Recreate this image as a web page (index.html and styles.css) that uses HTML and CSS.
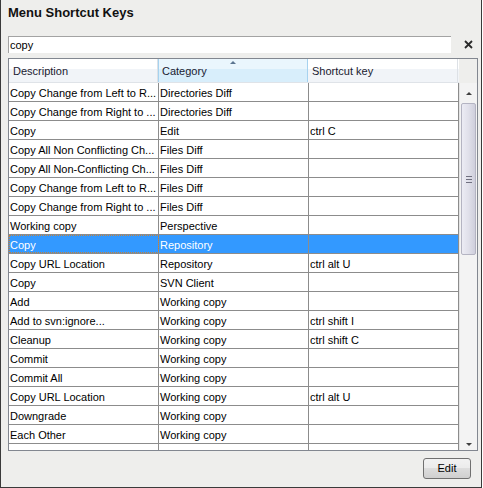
FILE: index.html
```html
<!DOCTYPE html>
<html>
<head>
<meta charset="utf-8">
<link rel="stylesheet" href="styles.css">
</head>
<body>
<div class="window">
  <h1 class="title">Menu Shortcut Keys</h1>
  <div class="search-row">
    <div class="search">copy</div>
    <span class="clear"><svg width="9" height="9" viewBox="0 0 9 9"><path d="M1 1 L8 8 M8 1 L1 8" stroke="#2a2a2a" stroke-width="1.8" fill="none"/></svg></span>
  </div>
  <div class="pane">
    <div class="header">
      <div class="hcell">Description</div>
      <div class="hcell sorted"><span class="sort-arrow"></span>Category</div>
      <div class="hcell">Shortcut key</div>
    </div>
    <div class="corner"></div>
    <div class="body">
      <div class="row"><div class="cell">Copy Change from Left to R...</div><div class="cell">Directories Diff</div><div class="cell"></div></div>
      <div class="row"><div class="cell">Copy Change from Right to ...</div><div class="cell">Directories Diff</div><div class="cell"></div></div>
      <div class="row"><div class="cell">Copy</div><div class="cell">Edit</div><div class="cell">ctrl C</div></div>
      <div class="row"><div class="cell">Copy All Non Conflicting Ch...</div><div class="cell">Files Diff</div><div class="cell"></div></div>
      <div class="row"><div class="cell">Copy All Non-Conflicting Ch...</div><div class="cell">Files Diff</div><div class="cell"></div></div>
      <div class="row"><div class="cell">Copy Change from Left to R...</div><div class="cell">Files Diff</div><div class="cell"></div></div>
      <div class="row"><div class="cell">Copy Change from Right to ...</div><div class="cell">Files Diff</div><div class="cell"></div></div>
      <div class="row"><div class="cell">Working copy</div><div class="cell">Perspective</div><div class="cell"></div></div>
      <div class="row selected"><div class="cell focus">Copy</div><div class="cell">Repository</div><div class="cell"></div></div>
      <div class="row"><div class="cell">Copy URL Location</div><div class="cell">Repository</div><div class="cell">ctrl alt U</div></div>
      <div class="row"><div class="cell">Copy</div><div class="cell">SVN Client</div><div class="cell"></div></div>
      <div class="row"><div class="cell">Add</div><div class="cell">Working copy</div><div class="cell"></div></div>
      <div class="row"><div class="cell">Add to svn:ignore...</div><div class="cell">Working copy</div><div class="cell">ctrl shift I</div></div>
      <div class="row"><div class="cell">Cleanup</div><div class="cell">Working copy</div><div class="cell">ctrl shift C</div></div>
      <div class="row"><div class="cell">Commit</div><div class="cell">Working copy</div><div class="cell"></div></div>
      <div class="row"><div class="cell">Commit All</div><div class="cell">Working copy</div><div class="cell"></div></div>
      <div class="row"><div class="cell">Copy URL Location</div><div class="cell">Working copy</div><div class="cell">ctrl alt U</div></div>
      <div class="row"><div class="cell">Downgrade</div><div class="cell">Working copy</div><div class="cell"></div></div>
      <div class="row"><div class="cell">Each Other</div><div class="cell">Working copy</div><div class="cell"></div></div>
      <div class="row"><div class="cell">Edit conflicts</div><div class="cell">Working copy</div><div class="cell">ctrl shift E</div></div>
    </div>
    <div class="vscroll">
      <div class="arrow-btn"><span class="tri up"></span></div>
      <div class="track">
        <div class="thumb"><span class="grip"></span></div>
      </div>
      <div class="arrow-btn"><span class="tri down"></span></div>
    </div>
  </div>
  <div class="buttons">
    <button class="edit">Edit</button>
  </div>
</div>
</body>
</html>
```

FILE: styles.css
```css
html, body {
  margin: 0;
  padding: 0;
  background: #ffffff;
}

.window {
  width: 482px;
  height: 488px;
  box-sizing: border-box;
  border-left: 1px solid #3a3a3a;
  border-right: 1px solid #3a3a3a;
  border-bottom: 1px solid #3a3a3a;
  background: #eeeeec;
  padding: 5px 3px 0 7px;
  display: flex;
  flex-direction: column;
  font-family: "Liberation Sans", Arial, sans-serif;
  font-size: 11px;
  color: #000;
}

.title {
  margin: 0;
  font-size: 13px;
  font-weight: bold;
  line-height: 15px;
  height: 15px;
  color: #111;
}

.search-row {
  margin-top: 16px;
  display: flex;
  align-items: flex-start;
  height: 18px;
}

.search {
  width: 443px;
  height: 17px;
  box-sizing: border-box;
  background: #ffffff;
  border-top: 1px solid #a3a3a3;
  border-left: 1px solid #a3a3a3;
  padding: 1px 0 0 1px;
  line-height: 14px;
  margin-right: 2px;
}

.clear {
  display: block;
  margin-left: 11px;
  margin-top: 4px;
  width: 9px;
  height: 9px;
}
.clear svg { display: block; }

.pane {
  margin-top: 4px;
  width: 470px;
  height: 393px;
  box-sizing: border-box;
  border: 1px solid #828790;
  background: #ffffff;
  display: grid;
  grid-template-columns: 450px 18px;
  grid-template-rows: 24px 367px;
  overflow: hidden;
}

.header {
  display: grid;
  grid-template-columns: 149px 150px 150px 1px;
  border-bottom: 1px solid #dfe3e8;
  background: linear-gradient(#ffffff 0, #ffffff 45%, #f1f4f8 45%, #f1f4f8 100%);
}

.hcell {
  position: relative;
  padding: 2px 0 0 4px;
  line-height: 21px;
  color: #1a1a30;
  border-right: 1px solid #dde1e6;
}

.hcell.sorted {
  background: linear-gradient(#eaf6fd 0, #eaf6fd 45%, #d8eefb 45%, #d8eefb 100%);
  border-left: 1px solid #a6d2ef;
  border-right: 1px solid #a6d2ef;
  padding-left: 3px;
}

.sort-arrow {
  position: absolute;
  top: 2px;
  left: 71px;
  width: 0;
  height: 0;
  border-left: 3px solid transparent;
  border-right: 3px solid transparent;
  border-bottom: 3px solid #5b7590;
}

.corner {
  background: #eeeeec;
}

.body {
  overflow: hidden;
  background: #ffffff;
}

.row {
  display: grid;
  grid-template-columns: 150px 150px 150px;
  height: 19px;
  box-sizing: border-box;
  border-bottom: 1px solid #8c8c8c;
}

.cell {
  border-right: 1px solid #8c8c8c;
  padding: 3px 0 0 1px;
  line-height: 15px;
  white-space: nowrap;
  overflow: hidden;
}

.row.selected {
  background: #3399ff;
  color: #ffffff;
}

.cell.focus {
  outline: 1px dotted #c2823c;
  outline-offset: -1px;
}

.vscroll {
  display: flex;
  flex-direction: column;
  background: #f3f3f3;
  border-left: 1px solid #e4e4e4;
}

.arrow-btn {
  height: 18px;
  display: flex;
  align-items: center;
  justify-content: center;
}

.tri {
  width: 0;
  height: 0;
  border-left: 3px solid transparent;
  border-right: 3px solid transparent;
}
.tri.up { border-bottom: 3px solid #404040; margin-top: 2px; }
.tri.down { border-top: 3px solid #404040; margin-top: 6px; }

.track {
  flex: 1;
  padding: 2px 1px 0 1px;
}

.thumb {
  height: 152px;
  box-sizing: border-box;
  border: 1px solid #b4b4c2;
  border-radius: 2px;
  background: linear-gradient(90deg, #ececf4 0%, #e0e0ea 50%, #cfcfdc 100%);
  display: flex;
  align-items: center;
  justify-content: center;
}

.grip {
  display: block;
  width: 6px;
  height: 5px;
  border-top: 1px solid #707080;
  border-bottom: 1px solid #707080;
  background: linear-gradient(#ffffff00 0, #ffffff00 2px, #707080 2px, #707080 3px, #ffffff00 3px);
}

.buttons {
  margin-top: 7px;
  display: flex;
  justify-content: flex-end;
  padding-right: 7px;
}

.edit {
  width: 48px;
  height: 21px;
  box-sizing: border-box;
  border: 1px solid #707070;
  border-radius: 3px;
  background: linear-gradient(#f2f2f2 0, #ebebeb 50%, #dddddd 50%, #cfcfcf 100%);
  font-family: "Liberation Sans", Arial, sans-serif;
  font-size: 11px;
  color: #000;
  padding: 0;
  line-height: 19px;
}
```
